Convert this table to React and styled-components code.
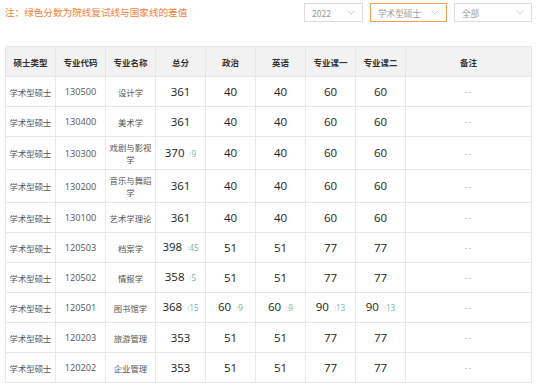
import styled, { createGlobalStyle } from 'styled-components';

const GlobalStyle = createGlobalStyle`
  body {
    margin: 0;
    background: #fff;
    font-family: "Noto Sans CJK SC", "Noto Sans", sans-serif;
  }
`;

const Page = styled.div`
  width: 536px;
  padding: 3px 5px 0 5px;
  box-sizing: border-box;
`;

const TopBar = styled.div`
  display: flex;
  align-items: center;
  justify-content: space-between;
  height: 19px;
  margin-bottom: 24px;
`;

const Note = styled.div`
  color: #f0823a;
  font-size: 9.6px;
  line-height: 19px;
`;

const Filters = styled.div`
  display: flex;
  gap: 7px;
  margin-right: -1px;
`;

const Select = styled.div`
  width: ${({ w }) => w}px;
  height: 19px;
  box-sizing: border-box;
  border: 1px solid ${({ active }) => (active ? '#f0a05a' : '#dcdcdc')};
  display: flex;
  align-items: center;
  justify-content: space-between;
  padding: 0 7px 0 7px;
  font-size: 8.6px;
  color: #999;
`;

const Chevron = () => (
  <svg width="8" height="5" viewBox="0 0 8 5">
    <path d="M0.5 0.5 L4 4 L7.5 0.5" fill="none" stroke="#c8c8c8" strokeWidth="0.9" />
  </svg>
);

const Table = styled.table`
  width: 526px;
  border-collapse: collapse;
  table-layout: fixed;
`;

const Th = styled.th`
  background: #f2f2f2;
  border: 1px solid #e6e6e6;
  height: 29px;
  padding: 0;
  font-size: 8.5px;
  font-weight: 700;
  color: #333;
  text-align: center;
`;

const Td = styled.td`
  border: 1px solid #e8e8e8;
  height: ${({ tall }) => (tall ? 32 : 29)}px;
  padding: 0 1px;
  text-align: center;
  font-size: 8.4px;
  color: #555;
  line-height: 12px;
  white-space: ${({ wrap }) => (wrap ? 'normal' : 'nowrap')};
`;

const Code = styled.span`
  font-size: 9.2px;
  color: #555;
  font-family: "Open Sans", "Noto Sans", sans-serif;
`;

const Score = styled.span`
  font-size: 11.5px;
  color: #222;
  font-family: "Open Sans", "Noto Sans", sans-serif;
`;

const Delta = styled.span`
  font-size: 8.2px;
  color: #6db9a6;
  margin-left: 4px;
  font-family: "Open Sans", "Noto Sans", sans-serif;
`;

const Arrow = styled.span`
  display: inline-block;
  transform: scaleX(0.6);
  margin-right: -1px;
`;

const Remark = styled.span`
  color: #aaa;
  font-size: 8px;
  letter-spacing: 1px;
`;

const widths = [50, 50, 50, 50, 50, 50, 50, 50, 126];
const heads = ['硕士类型', '专业代码', '专业名称', '总分', '政治', '英语', '专业课一', '专业课二', '备注'];

const rows = [
  { code: '130500', name: '设计学', s: [['361'], ['40'], ['40'], ['60'], ['60']] },
  { code: '130400', name: '美术学', s: [['361'], ['40'], ['40'], ['60'], ['60']] },
  { code: '130300', name: '戏剧与影视学', tall: true, s: [['370', '9'], ['40'], ['40'], ['60'], ['60']] },
  { code: '130200', name: '音乐与舞蹈学', tall: true, s: [['361'], ['40'], ['40'], ['60'], ['60']] },
  { code: '130100', name: '艺术学理论', s: [['361'], ['40'], ['40'], ['60'], ['60']] },
  { code: '120503', name: '档案学', s: [['398', '45'], ['51'], ['51'], ['77'], ['77']] },
  { code: '120502', name: '情报学', s: [['358', '5'], ['51'], ['51'], ['77'], ['77']] },
  { code: '120501', name: '图书馆学', s: [['368', '15'], ['60', '9'], ['60', '9'], ['90', '13'], ['90', '13']] },
  { code: '120203', name: '旅游管理', s: [['353'], ['51'], ['51'], ['77'], ['77']] },
  { code: '120202', name: '企业管理', s: [['353'], ['51'], ['51'], ['77'], ['77']] },
];

const App = () => (
  <Page>
    <GlobalStyle />
    <TopBar>
      <Note>注：绿色分数为院线复试线与国家线的差值</Note>
      <Filters>
        <Select w={59}>2022<Chevron /></Select>
        <Select w={77} active>学术型硕士<Chevron /></Select>
        <Select w={78}>全部<Chevron /></Select>
      </Filters>
    </TopBar>
    <Table>
      <colgroup>
        {widths.map((w, i) => <col key={i} style={{ width: w }} />)}
      </colgroup>
      <thead>
        <tr>{heads.map(h => <Th key={h}>{h}</Th>)}</tr>
      </thead>
      <tbody>
        {rows.map(r => (
          <tr key={r.code}>
            <Td tall={r.tall}>学术型硕士</Td>
            <Td tall={r.tall}><Code>{r.code}</Code></Td>
            <Td tall={r.tall} wrap>{r.name}</Td>
            {r.s.map(([v, d], i) => (
              <Td key={i} tall={r.tall}>
                <Score>{v}</Score>
                {d && <Delta><Arrow>↑</Arrow>{d}</Delta>}
              </Td>
            ))}
            <Td tall={r.tall}><Remark>--</Remark></Td>
          </tr>
        ))}
      </tbody>
    </Table>
  </Page>
);

export default App;
